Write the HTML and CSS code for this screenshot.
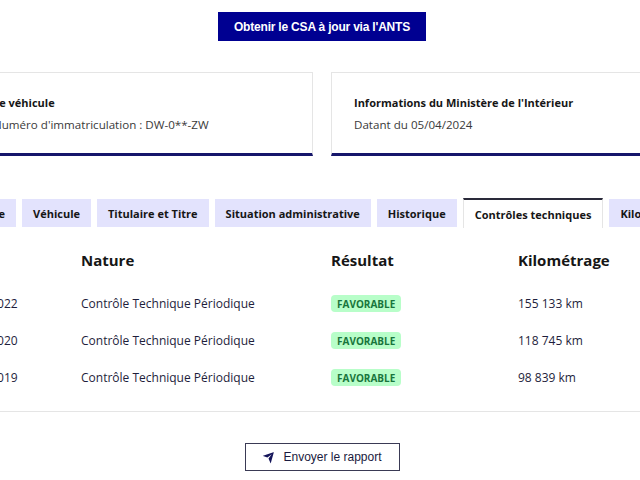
FILE: index.html
```html
<!DOCTYPE html>
<html lang="fr">
<head>
<meta charset="utf-8">
<title>Historique du véhicule</title>
<link rel="stylesheet" href="styles.css">
</head>
<body>
<div class="page">
  <div class="top">
    <a class="btn-primary" href="#">Obtenir le CSA à jour via l'ANTS</a>
  </div>

  <div class="cards">
    <div class="card">
      <h3 class="card-title">Le véhicule</h3>
      <p class="card-desc">Numéro d'immatriculation : DW-0**-ZW</p>
    </div>
    <div class="card">
      <h3 class="card-title">Informations du Ministère de l'Intérieur</h3>
      <p class="card-desc">Datant du 05/04/2024</p>
    </div>
  </div>

  <div class="tabs">
    <ul class="tablist">
      <li class="tab">Synthèse</li>
      <li class="tab">Véhicule</li>
      <li class="tab">Titulaire et Titre</li>
      <li class="tab">Situation administrative</li>
      <li class="tab">Historique</li>
      <li class="tab tab-active">Contrôles techniques</li>
      <li class="tab">Kilométrage</li>
    </ul>
    <div class="panel">
      <div class="table">
        <div class="th">Date</div>
        <div class="th">Nature</div>
        <div class="th">Résultat</div>
        <div class="th">Kilométrage</div>

        <div class="td">12/10/2022</div>
        <div class="td">Contrôle Technique Périodique</div>
        <div class="td"><span class="badge">Favorable</span></div>
        <div class="td">155 133 km</div>

        <div class="td">08/10/2020</div>
        <div class="td">Contrôle Technique Périodique</div>
        <div class="td"><span class="badge">Favorable</span></div>
        <div class="td">118 745 km</div>

        <div class="td">24/09/2019</div>
        <div class="td">Contrôle Technique Périodique</div>
        <div class="td"><span class="badge">Favorable</span></div>
        <div class="td">98 839 km</div>
      </div>
    </div>
  </div>

  <div class="actions">
    <button class="btn-secondary" type="button">
      <svg class="icon" viewBox="0 0 24 24" width="13" height="13" aria-hidden="true"><path d="M1.946 9.315c-.522-.174-.527-.455.01-.634l19.087-6.362c.529-.176.832.12.684.638l-5.454 19.086c-.15.529-.455.547-.679.045L12 14l6-8-8 6-8.054-2.685z"/></svg>
      <span>Envoyer le rapport</span>
    </button>
  </div>
</div>
</body>
</html>
```

FILE: styles.css
```css
* { box-sizing: border-box; }

body {
  margin: 0;
  overflow: hidden;
  background: #ffffff;
  font-family: "Open Sans", "Liberation Sans", sans-serif;
  color: #161616;
}

.page {
  width: 704px;
  margin-left: -30px;
}

.top {
  display: flex;
  justify-content: center;
  padding-top: 12px;
}

.btn-primary {
  display: flex;
  align-items: center;
  justify-content: center;
  width: 208px;
  height: 29px;
  background: #000091;
  color: #ffffff;
  font-family: "Liberation Sans", Arial, sans-serif;
  font-weight: bold;
  font-size: 12px;
  letter-spacing: -0.2px;
  text-decoration: none;
}

.cards {
  display: flex;
  gap: 18px;
  margin-top: 31px;
}

.card {
  flex: 1;
  height: 84px;
  border: 1px solid #e5e5e5;
  border-bottom: 3px solid #16166b;
  padding: 21px 22px 0;
}

.card-title {
  margin: 0;
  font-size: 11px;
  font-weight: 700;
  line-height: 18px;
  color: #161616;
}

.card-desc {
  margin: 4px 0 0;
  font-size: 11.6px;
  line-height: 18px;
  color: #3a3a3a;
}

.tabs {
  margin-top: 43px;
  margin-left: -23px;
  width: 760px;
}

.tablist {
  display: flex;
  gap: 6px;
  margin: 0 0 0 -3px;
  padding: 0;
  list-style: none;
}

.tab {
  flex: none;
  height: 28px;
  padding: 0 11px;
  display: flex;
  align-items: center;
  background: #e3e3fd;
  font-size: 11px;
  font-weight: 700;
  color: #161616;
  white-space: nowrap;
}

.tab-active {
  background: #ffffff;
  border-top: 2px solid #2a2a3a;
  border-left: 1px solid #e5e5e5;
  border-right: 1px solid #e5e5e5;
  height: 30px;
  margin-top: -1px;
  margin-bottom: -1px;
  position: relative;
}

.panel {
  background: #ffffff;
  padding: 22px 0 15px;
  border-bottom: 1px solid #e5e5e5;
}

.table {
  display: grid;
  grid-template-columns: 127px 250px 187px 1fr;
  margin-left: 7px;
}

.th {
  font-size: 15px;
  font-weight: 700;
  line-height: 22px;
  color: #161616;
  margin-bottom: 14px;
}

.td {
  height: 37px;
  display: flex;
  align-items: center;
  font-size: 12px;
  color: #1e1e3c;
}

.badge {
  display: inline-flex;
  align-items: center;
  height: 17px;
  padding: 0 6px;
  border-radius: 4px;
  background: #b8fec9;
  color: #18753c;
  font-size: 10px;
  font-weight: 700;
  text-transform: uppercase;
}

.actions {
  display: flex;
  justify-content: center;
  padding-top: 31px;
}

.btn-secondary {
  display: flex;
  align-items: center;
  gap: 8px;
  height: 28px;
  width: 155px;
  justify-content: center;
  background: #ffffff;
  border: 1px solid #3a3a55;
  color: #1a1a40;
  font-family: "Liberation Sans", Arial, sans-serif;
  font-size: 12px;
  padding: 0 12px;
}

.icon {
  fill: #14145a;
  flex: none;
}
```
